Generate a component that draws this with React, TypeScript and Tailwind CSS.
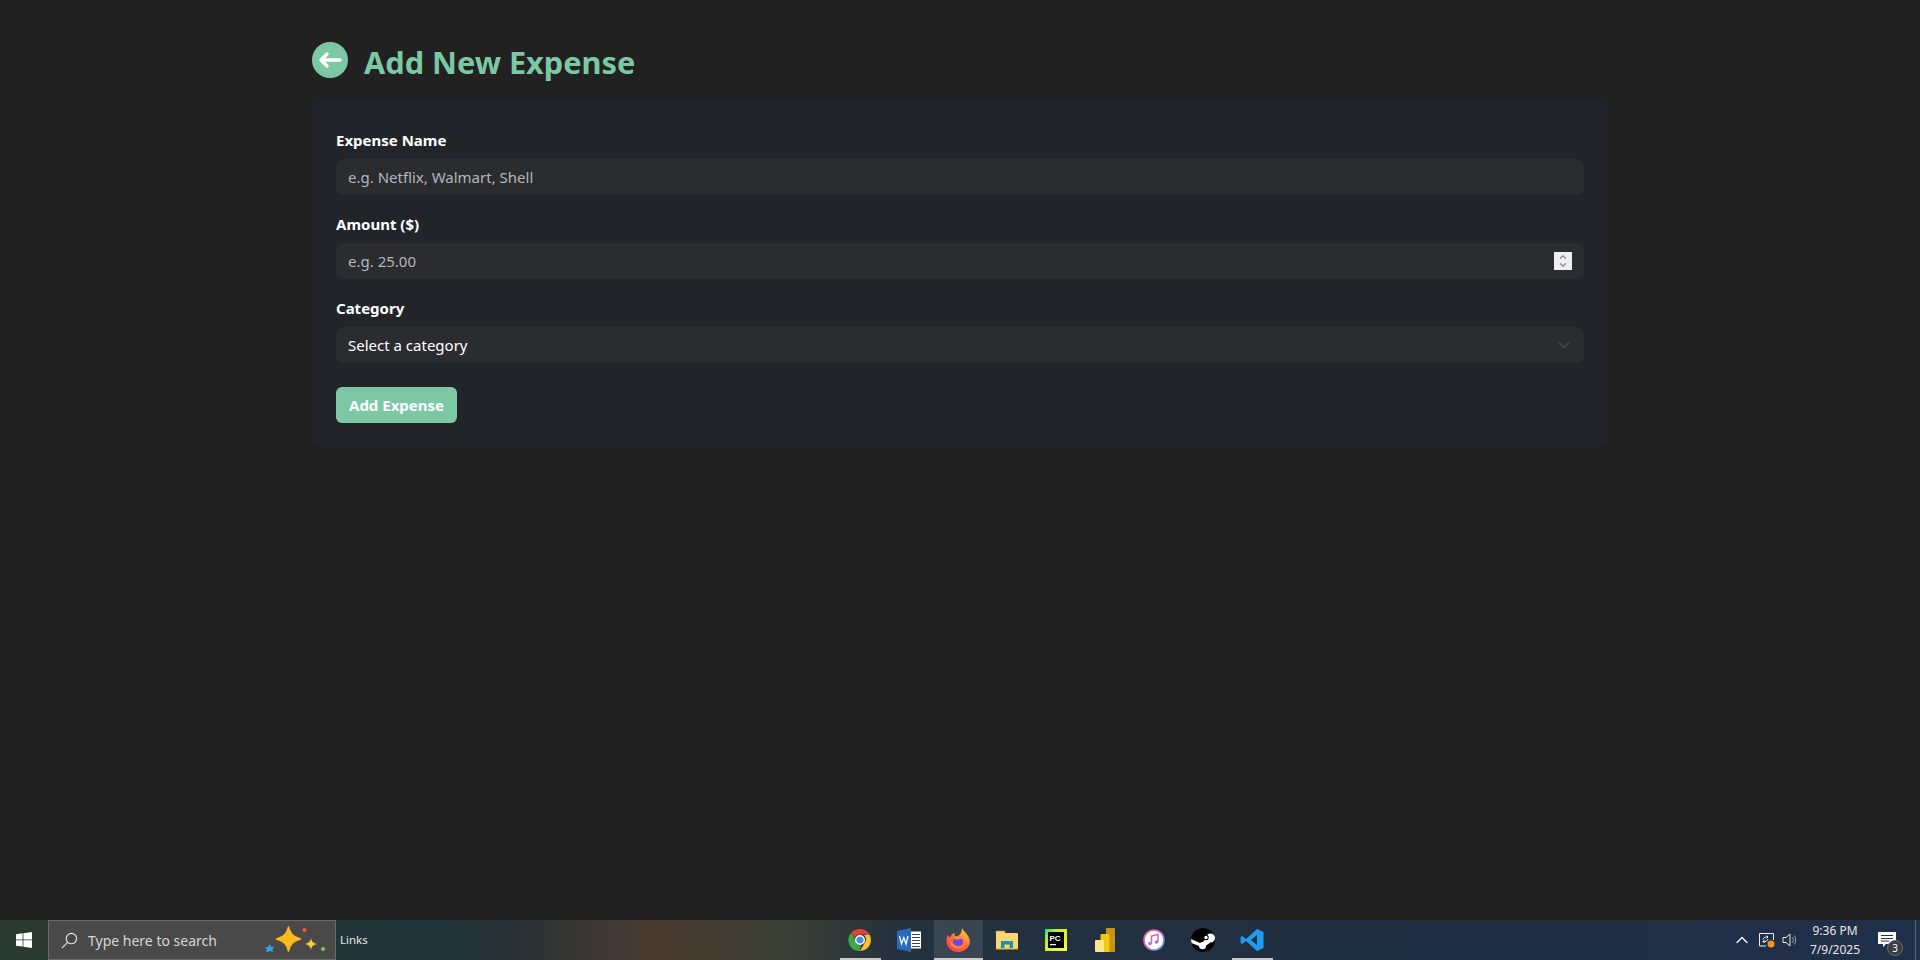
import React from 'react'
import { ChevronDown, ChevronUp } from 'lucide-react'

function Field({ label, children }: { label: string; children: React.ReactNode }) {
  return (
    <div className="mb-[15px]">
      <label className="block h-[33px] text-[15px] leading-[28px] font-bold text-white">{label}</label>
      {children}
    </div>
  )
}

function WinLogo() {
  return (
    <svg width="16" height="16" viewBox="0 0 16 16" fill="#fff">
      <path d="M0 2.300 6.600 1.300V7.500H0z" />
      <path d="M7.400 1.200 16 0V7.500H7.400z" />
      <path d="M0 8.300H6.600V14.600L0 13.700z" />
      <path d="M7.400 8.300H16V16L7.400 14.800z" />
    </svg>
  )
}

function Sparkles() {
  return (
    <svg width="64" height="36" viewBox="0 0 64 36">
      <path d="M26.500 5C28 12 31 15 38.500 17C31 19 28 22 26.500 29C25 22 22 19 14.500 17C22 15 25 12 26.500 5Z" fill="#fbb91f" stroke="#fbb91f" strokeWidth="1.500" strokeLinejoin="round" />
      <path d="M49 16C49.700 19.500 51 21 55 22C51 23 49.700 24.500 49 28C48.300 24.500 47 23 43 22C47 21 48.300 19.500 49 16Z" fill="#fcc93c" />
      <circle cx="42.500" cy="8" r="2" fill="#e8602c" />
      <circle cx="61" cy="27" r="2" fill="#8cc63f" />
      <path d="M8 22 9 25 12 24.500 10.500 27.500 11 30 8 29 4 30.500 5 27.500 3 25.500 6 25Z" fill="#2ea6e8" />
    </svg>
  )
}

function ChromeIcon() {
  return (
    <svg width="24" height="24" viewBox="0 0 24 24">
      <path d="M12 1a11 11 0 0 1 9.500 5.500H12a5.500 5.500 0 0 0-5.200 3.700L3.300 4.600A11 11 0 0 1 12 1z" fill="#db4437" />
      <path d="M21.500 6.500A11 11 0 0 1 12 23l4.700-8.200A5.500 5.500 0 0 0 16 7z" fill="#fbc02d" />
      <path d="M12 23A11 11 0 0 1 3.300 4.600l4.600 8.900A5.500 5.500 0 0 0 13 17.400z" fill="#3fa648" />
      <circle cx="12" cy="12" r="4.300" fill="#4a90d9" stroke="#fff" strokeWidth="1.400" />
    </svg>
  )
}

function WordIcon() {
  return (
    <svg width="24" height="24" viewBox="0 0 24 24">
      <rect x="10" y="3.500" width="14" height="17" fill="#fff" />
      <path d="M15 6.500h8M15 9.500h8M15 12.500h8M15 15.500h8M15 18.500h8" stroke="#444" strokeWidth="1" />
      <path d="M0 3 14 0V24L0 21z" fill="#2b6cb8" />
      <path d="M2.500 8 4.500 16 6.800 9.500 9 16 11 8" fill="none" stroke="#fff" strokeWidth="1.200" />
    </svg>
  )
}

function FirefoxIcon() {
  return (
    <svg width="24" height="24" viewBox="0 0 24 24">
      <defs>
        <linearGradient id="ff" x1="0.800" y1="0" x2="0.200" y2="1">
          <stop offset="0" stopColor="#ffd43a" />
          <stop offset="0.500" stopColor="#ff7139" />
          <stop offset="1" stopColor="#ff2f6e" />
        </linearGradient>
      </defs>
      <path d="M16 0c1 3 6 6 7.500 11 1.500 6-3 13-11.500 13C5 24 .500 19 .500 13c0-2 .500-4 1.500-6 .500 1 1 2 2 2.500C5 7 7 5 9 5c-1 2 0 3 1 3.500 3-.500 6-3 6-8.500z" fill="url(#ff)" />
      <circle cx="12" cy="13.500" r="5" fill="#7542e5" />
      <path d="M7.500 10c2-2.500 7-2.500 9.500 1.500-2-1-4-1-5 0-2 0-3.500-.500-4.500-1.500z" fill="#ff980e" />
      <path d="M4 12c0 5 3 8.500 8 8.500 4 0 7-2.500 8-6-2 3-5 4.500-8 4-3-.500-6-3-8-6.500z" fill="#ff980e" />
    </svg>
  )
}

function ExplorerIcon() {
  return (
    <svg width="24" height="24" viewBox="0 0 24 24">
      <path d="M1 3h9v3H1z" fill="#f4d67a" stroke="#a88a3a" strokeWidth=".6" />
      <rect x="1" y="5" width="22" height="16" rx="1" fill="#fbd672" />
      <path d="M6 21v-8h12v8h-3.500v-4.500h-5V21z" fill="#1f93ad" />
      <rect x="1" y="20" width="22" height="1.500" fill="#e0b850" />
    </svg>
  )
}

function PyCharmIcon() {
  return (
    <svg width="22" height="22" viewBox="0 0 22 22">
      <defs>
        <linearGradient id="pc" x1="0" y1="0" x2="1" y2="1">
          <stop offset="0" stopColor="#21d789" />
          <stop offset="0.300" stopColor="#c8e82a" />
          <stop offset="1" stopColor="#fcf84a" />
        </linearGradient>
      </defs>
      <rect width="22" height="22" fill="url(#pc)" />
      <rect x="3" y="3" width="16" height="16" fill="#000" />
      <text x="4.500" y="11.500" fill="#fff" fontSize="8" fontWeight="700" fontFamily="Liberation Sans, sans-serif">PC</text>
      <rect x="5" y="15" width="6" height="1.200" fill="#fff" />
    </svg>
  )
}

function PowerBiIcon() {
  return (
    <svg width="20" height="24" viewBox="0 0 20 24">
      <rect x="11" y="0" width="9" height="24" rx="1" fill="#c99415" />
      <rect x="5.500" y="6" width="9" height="18" rx="1" fill="#f2c811" />
      <rect x="0" y="12" width="9" height="12" rx="1" fill="#fde68a" />
    </svg>
  )
}

function ItunesIcon() {
  return (
    <svg width="22" height="22" viewBox="0 0 22 22">
      <defs>
        <linearGradient id="it" x1="0" y1="0" x2="1" y2="1">
          <stop offset="0" stopColor="#fb5c74" />
          <stop offset=".5" stopColor="#c86dd7" />
          <stop offset="1" stopColor="#3ba6f5" />
        </linearGradient>
      </defs>
      <circle cx="11" cy="11" r="10" fill="#fff" stroke="url(#it)" strokeWidth="1.600" />
      <path d="M8.500 14.500V7l6.500-1.500V13" fill="none" stroke="url(#it)" strokeWidth="1.500" />
      <circle cx="7" cy="14.500" r="1.800" fill="#b66be0" />
      <circle cx="13.500" cy="13" r="1.800" fill="#b66be0" />
    </svg>
  )
}

function SteamIcon() {
  return (
    <svg width="24" height="24" viewBox="0 0 24 24">
      <circle cx="12" cy="12" r="12" fill="#000" />
      <path d="M0 11 9 15a4 4 0 0 1 3-1l3-4a4.500 4.500 0 1 1 4.500 4.500L15 17.500a3.500 3.500 0 0 1-7 .5L.500 15z" fill="#fff" />
      <circle cx="15" cy="9.500" r="2.700" fill="#000" />
      <circle cx="15" cy="9.500" r="1.700" fill="#fff" />
    </svg>
  )
}

function VsCodeIcon() {
  return (
    <svg width="24" height="24" viewBox="0 0 24 24">
      <path d="M17 1 23.500 4v16L17 23 6 13l-3.500 3L.500 15v-6l2-1 3.500 3zM17 7l-6 5 6 5z" fill="#1f9cf0" fillRule="evenodd" />
    </svg>
  )
}

function TaskIcon({ children, open, active }: { children: React.ReactNode; open?: boolean; active?: boolean }) {
  return (
    <div className={`relative flex h-10 w-[49px] items-center justify-center ${active ? 'bg-white/10' : ''}`}>
      {children}
      {open && <div className={`absolute bottom-0 h-0.5 bg-[#c9c9c9] ${active ? 'inset-x-0' : 'inset-x-1'}`} />}
    </div>
  )
}

export default function App() {
  return (
    <div className='flex h-screen flex-col bg-[#212121] font-["Noto_Sans",sans-serif]'>
      <main className="flex-1">
        <div className="mx-auto w-[1296px] pt-[42px]">
          <div className="mb-6 flex h-9 items-center gap-4">
            <button className="flex h-9 w-9 items-center justify-center rounded-full bg-[#7dc8a4]">
              <svg width="24" height="24" viewBox="0 0 24 24" fill="none" stroke="#fff" strokeWidth="3.400" strokeLinecap="round" strokeLinejoin="round">
                <path d="M22 12H3M9 6l-6 6 6 6" />
              </svg>
            </button>
            <h1 className="pt-1 text-[30.700px] leading-9 font-bold text-[#7dc8a4]">Add New Expense</h1>
          </div>

          <div className="rounded-lg bg-[#212429] p-6">
            <Field label="Expense Name">
              <div className="flex h-9 items-center rounded-lg bg-[#2b2c30] px-3 text-[15px] text-[#b4b6ba]">
                e.g. Netflix, Walmart, Shell
              </div>
            </Field>
            <Field label="Amount ($)">
              <div className="flex h-9 items-center justify-between rounded-lg bg-[#2b2c30] px-3 text-[15px] text-[#b4b6ba]">
                e.g. 25.00
                <div className="flex h-[18px] w-[18px] flex-col items-center justify-center bg-[#ededf2] text-[#8a8a94]">
                  <ChevronUp size={10} strokeWidth={3} className="-mb-px" />
                  <ChevronDown size={10} strokeWidth={3} className="-mt-px" />
                </div>
              </div>
            </Field>
            <Field label="Category">
              <div className="flex h-9 items-center justify-between rounded-lg bg-[#2b2c30] px-3 text-[15px] text-white">
                Select a category
                <ChevronDown size={20} strokeWidth={2} className="-mr-0.5 text-[#44464b]" />
              </div>
            </Field>
            <button className="mt-6 block h-9 w-[121px] rounded-md bg-[#7dc8a4] text-[15px] font-bold text-white">
              Add Expense
            </button>
          </div>
        </div>
      </main>

      <footer className="flex h-10 items-center bg-[linear-gradient(90deg,#2a3a30_0%,#22363a_18%,#1e3237_23%,#2a3236_27%,#4a3a30_34%,#3a3f33_41%,#24313e_47%,#1f2d42_75%,#21304a_100%)] text-white">
        <div className="flex h-10 w-12 items-center justify-center">
          <WinLogo />
        </div>
        <div className="flex h-10 w-[288px] items-center border border-[#6b6b6b] bg-[#494949] pl-3">
          <svg width="17" height="17" viewBox="0 0 18 18" fill="none" stroke="#e6e6e6" strokeWidth="1.200">
            <circle cx="11" cy="7" r="5.500" />
            <path d="M7 11 1 17" />
          </svg>
          <span className="ml-[10px] text-[14px] text-[#d6d6d6]">Type here to search</span>
          <div className="mr-[9px] ml-auto">
            <Sparkles />
          </div>
        </div>
        <span className="ml-1 text-[11.500px] text-[#e6e6e6]">Links</span>

        <div className="ml-[468px] flex">
          <TaskIcon open><ChromeIcon /></TaskIcon>
          <TaskIcon><WordIcon /></TaskIcon>
          <TaskIcon open active><FirefoxIcon /></TaskIcon>
          <TaskIcon><ExplorerIcon /></TaskIcon>
          <TaskIcon><PyCharmIcon /></TaskIcon>
          <TaskIcon><PowerBiIcon /></TaskIcon>
          <TaskIcon><ItunesIcon /></TaskIcon>
          <TaskIcon><SteamIcon /></TaskIcon>
          <TaskIcon open><VsCodeIcon /></TaskIcon>
        </div>

        <div className="ml-auto flex items-center">
          <ChevronUp size={20} strokeWidth={1.500} className="text-white" />
          <svg className="ml-[6px]" width="18" height="18" viewBox="0 0 18 18" fill="none" stroke="#f0f0f0" strokeWidth="1">
            <path d="M8 15H1.500V2.500h14V9" />
            <path d="M5 8.500c.500-2 2.500-3 5-2.500M10 8c-.500 2-2.500 3-5 2.500M8.500 4.500 10 6 8.500 7.500M6.500 9 5 10.500 6.500 12" />
            <circle cx="13" cy="13" r="3.500" fill="#f7931a" stroke="none" />
          </svg>
          <svg className="ml-[6px]" width="16" height="16" viewBox="0 0 16 16" fill="none" stroke="#e6e6e6" strokeWidth="1">
            <path d="M1 5.500h3l4-3.500v12l-4-3.500H1z" />
            <path d="M10.500 5c1 1.800 1 4.200 0 6M12.500 3.500c1.500 2.800 1.500 6.200 0 9" stroke="#9aa0a8" />
          </svg>
          <div className="ml-[5px] w-16 text-center text-xs leading-[19px] text-[#e6e6e6]">
            <div>9:36 PM</div>
            <div>7/9/2025</div>
          </div>
          <div className="relative mr-[19px] ml-[11px] h-4 w-[18px]">
            <svg width="18" height="16" viewBox="0 0 18 16" fill="#fff">
              <path d="M0 0h18v12H8l-3 3v-3H0z" />
              <path d="M3 3.500h12M3 6.500h12M3 9h8" stroke="#21304a" strokeWidth="1" />
            </svg>
            <div className="absolute -right-[7px] -bottom-[8px] flex h-4 w-4 items-center justify-center rounded-full border border-[#6a6d72] bg-[#3a3d42] text-[10px] text-white">
              3
            </div>
          </div>
          <div className="mr-1 h-10 w-px bg-[#5a6470]" />
        </div>
      </footer>
    </div>
  )
}
